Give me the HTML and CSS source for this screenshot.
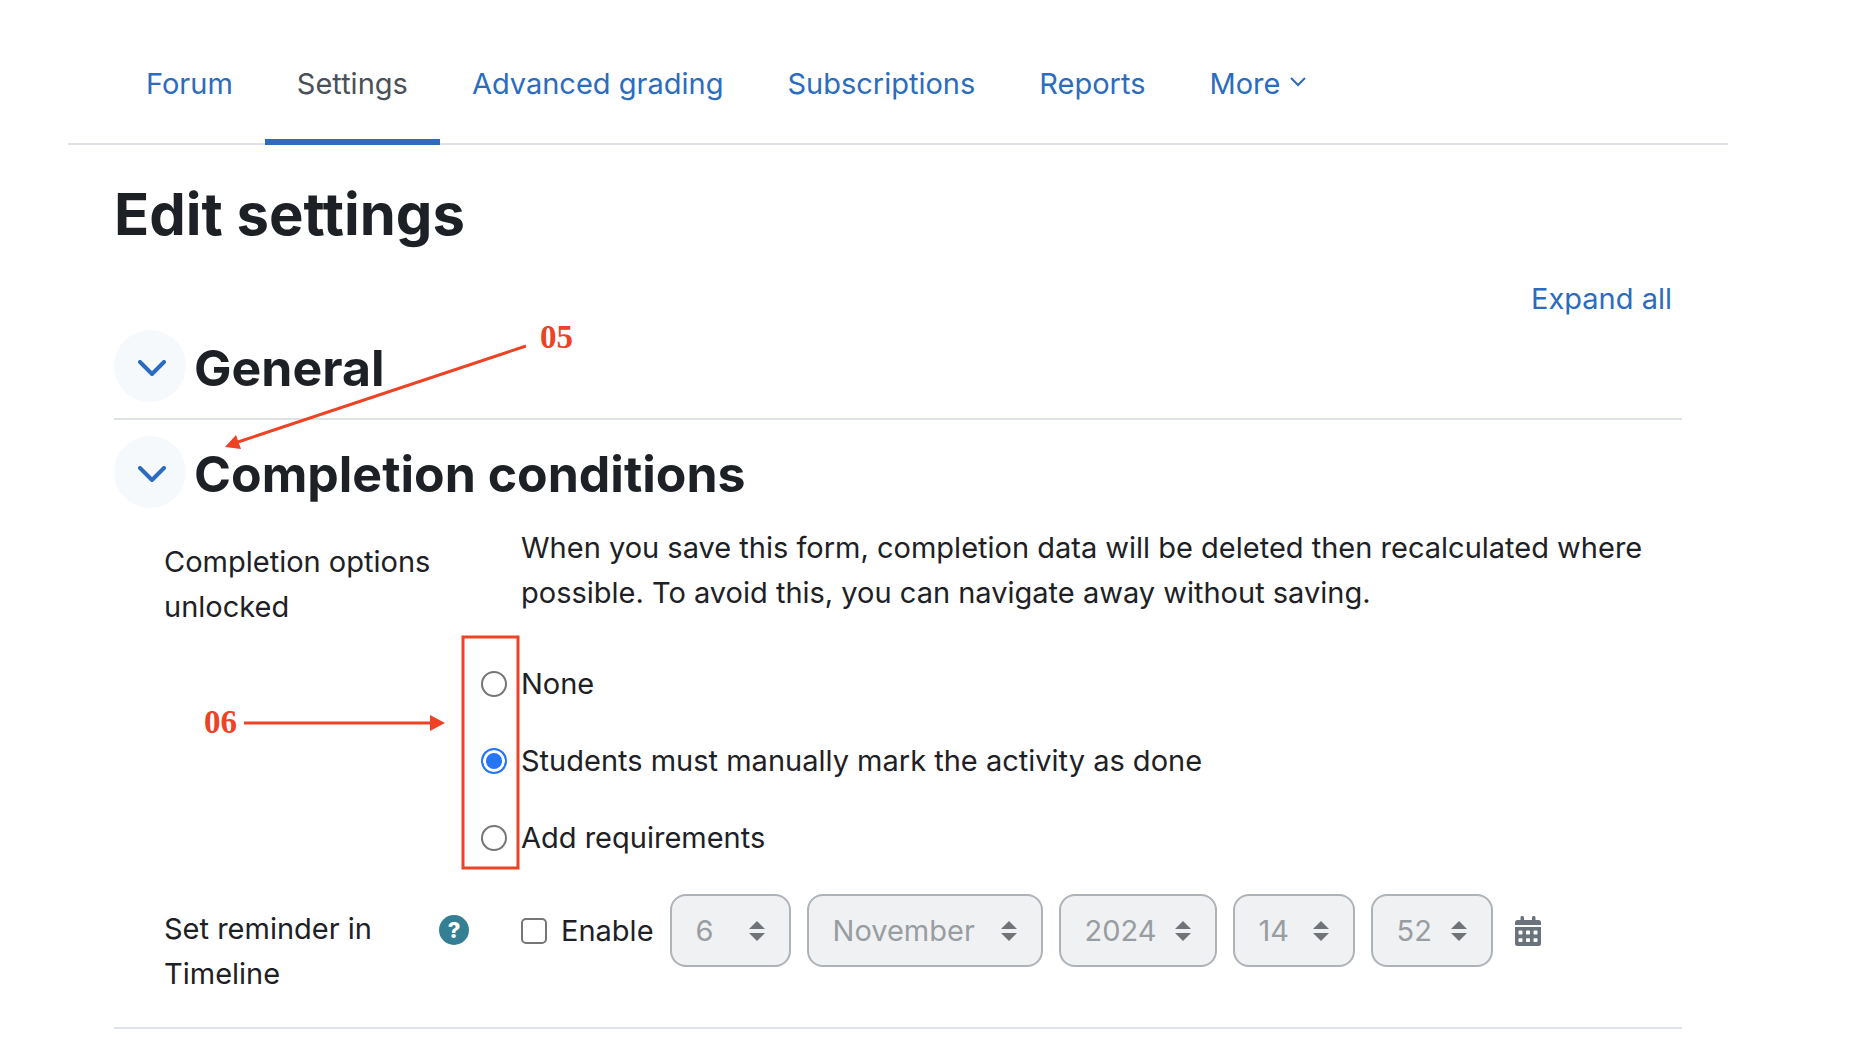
FILE: index.html
```html
<!DOCTYPE html>
<html lang="en">
<head>
<meta charset="utf-8">
<title>Edit settings</title>
<link rel="stylesheet" href="styles.css">
</head>
<body>
<div class="page">
  <nav class="tabs" aria-label="Activity">
    <a class="tab" href="#forum">Forum</a>
    <a class="tab tab-active" href="#settings" aria-current="page">Settings</a>
    <a class="tab" href="#grading">Advanced grading</a>
    <a class="tab" href="#subscriptions">Subscriptions</a>
    <a class="tab" href="#reports">Reports</a>
    <a class="tab" href="#more">More<svg class="more-icon" viewBox="0 0 16 16" aria-hidden="true"><path d="M1 4l7 7 7-7"/></svg></a>
  </nav>

  <main class="content">
    <h1 class="title">Edit settings</h1>
    <div class="expand"><a class="link" href="#expand">Expand all</a></div>

    <form>
      <section class="section">
        <div class="section-head">
          <button class="toggle" type="button" aria-label="General"><svg class="toggle-icon" viewBox="0 0 28 16" aria-hidden="true"><path d="M2 2l12 12L26 2"/></svg></button>
          <h2 class="section-title">General</h2>
        </div>
      </section>

      <section class="section section-open">
        <div class="section-head">
          <button class="toggle" type="button" aria-label="Completion conditions"><svg class="toggle-icon" viewBox="0 0 28 16" aria-hidden="true"><path d="M2 2l12 12L26 2"/></svg></button>
          <h2 class="section-title">Completion conditions</h2>
        </div>

        <div class="row row-notice">
          <div class="row-label">Completion options unlocked</div>
          <p class="notice">When you save this form, completion data will be deleted then recalculated where possible. To avoid this, you can navigate away without saving.</p>
        </div>

        <div class="radios">
          <label class="choice"><input class="radio" type="radio" name="completion">None</label>
          <label class="choice"><input class="radio" type="radio" name="completion" checked>Students must manually mark the activity as done</label>
          <label class="choice"><input class="radio" type="radio" name="completion">Add requirements</label>
        </div>

        <div class="row">
          <div class="row-label row-label-help">
            <span>Set reminder in Timeline</span>
            <button class="help" type="button" aria-label="Help">?</button>
          </div>
          <div class="dates">
            <label class="enable"><input class="check" type="checkbox">Enable</label>
            <select class="select day" aria-label="Day" disabled><option>6</option></select>
            <select class="select month" aria-label="Month" disabled><option>November</option></select>
            <select class="select year" aria-label="Year" disabled><option>2024</option></select>
            <select class="select time" aria-label="Hour" disabled><option>14</option></select>
            <select class="select time" aria-label="Minute" disabled><option>52</option></select>
            <button class="calendar" type="button" aria-label="Calendar">
              <svg class="calendar-icon" viewBox="0 0 26 30" aria-hidden="true"><path fill-rule="evenodd" d="M0 9V6.500Q0 4 2.500 4H5.500V1.300Q5.500 0 7.200 0T9 1.300V4H17V1.300Q17 0 18.700 0T20.500 1.300V4H23.500Q26 4 26 6.500V9ZM0 11H26V27.500Q26 30 23.500 30H2.500Q0 30 0 27.500ZM4.300 14.500Q3.500 14.500 3.500 15.300V17.700Q3.500 18.500 4.300 18.500H6.700Q7.500 18.500 7.500 17.700V15.300Q7.500 14.500 6.700 14.500ZM11.800 14.500Q11 14.500 11 15.300V17.700Q11 18.500 11.800 18.500H14.200Q15 18.500 15 17.700V15.300Q15 14.500 14.200 14.500ZM19.300 14.500Q18.500 14.500 18.500 15.300V17.700Q18.500 18.500 19.300 18.500H21.700Q22.500 18.500 22.500 17.700V15.300Q22.500 14.500 21.700 14.500ZM4.300 22.300Q3.500 22.300 3.500 23.100V25.200Q3.500 26 4.300 26H6.700Q7.500 26 7.500 25.200V23.100Q7.500 22.300 6.700 22.300ZM11.800 22.300Q11 22.300 11 23.100V25.200Q11 26 11.800 26H14.200Q15 26 15 25.200V23.100Q15 22.300 14.200 22.300ZM19.300 22.300Q18.500 22.300 18.500 23.100V25.200Q18.500 26 19.300 26H21.700Q22.500 26 22.500 25.200V23.100Q22.500 22.300 21.700 22.300Z"/></svg>
            </button>
          </div>
        </div>
      </section>
    </form>
  </main>

  <svg class="notes" width="600" height="900" viewBox="0 0 600 900">
    <path class="note-line" d="M526 346L238 442M244 723H432M463 637H518V868H463Z"/>
    <path class="note-head" d="M225 447L236 435L241 449ZM445 723L430 715V731Z"/>
    <text class="note-text" x="540" y="348">05</text>
    <text class="note-text" x="204" y="733">06</text>
  </svg>
</div>
</body>
</html>
```
FILE: styles.css
```css
* { box-sizing: border-box; }

body {
  margin: 0;
  background: #fff;
  color: #1d2125;
  font-family: Inter, "Liberation Sans", sans-serif;
  font-size: 29px;
  line-height: 45px;
}

h1, h2, p { margin: 0; }

button {
  border: 0;
  padding: 0;
  font: inherit;
}

.page {
  position: relative;
  padding: 24px 122px 12px 68px;
}

.tabs {
  display: flex;
  padding-left: 46px;
  border-bottom: 2px solid #dee2e6;
}

.tab {
  margin-bottom: -2px;
  padding: 37px 32px 33px;
  border-bottom: 6px solid transparent;
  color: #2b6cbf;
  text-decoration: none;
}

.tab-active {
  color: #495057;
  border-bottom-color: #2b6cbf;
}

.more-icon {
  width: 16px;
  height: 16px;
  margin-left: 10px;
  vertical-align: 4px;
  fill: none;
  stroke: currentColor;
  stroke-width: 2;
}

.content { padding: 33px 46px 0; }

.title {
  font-size: 58px;
  line-height: 72px;
}

.expand {
  padding: 26px 10px 0;
  text-align: right;
}

.link {
  color: #2b6cbf;
  text-decoration: none;
}

.section {
  padding-bottom: 16px;
  border-bottom: 2px solid #dee2e6;
}

.section-open {
  padding-top: 16px;
  padding-bottom: 31px;
}

.expand + form { margin-top: 9px; }

.section-head {
  display: flex;
  align-items: center;
  gap: 8px;
}

.toggle {
  display: flex;
  align-items: center;
  justify-content: center;
  width: 72px;
  height: 72px;
  padding: 4px 0 0 4px;
  border-radius: 50%;
  background: #f5f9fc;
}

.toggle-icon {
  width: 28px;
  height: 16px;
  fill: none;
  stroke: #2b6cbf;
  stroke-width: 4;
  stroke-linecap: round;
  stroke-linejoin: round;
}

.section-title {
  padding-top: 4px;
  font-size: 50px;
  line-height: 60px;
}

.row {
  display: grid;
  grid-template-columns: 305px 1fr;
  column-gap: 52px;
  margin-left: 50px;
}

.row-notice { padding-top: 17px; }

.row-label { padding-top: 12px; }

.row-notice .row-label { padding-top: 14px; }

.row-label-help {
  display: flex;
  justify-content: space-between;
}

.help {
  flex: none;
  width: 30px;
  height: 30px;
  margin-top: 9px;
  border-radius: 50%;
  background: #357f94;
  color: #fff;
  font-size: 22px;
  font-weight: 800;
  line-height: 30px;
}

.radios {
  display: grid;
  gap: 32px;
  padding: 32px 0 34px 367px;
}

.choice {
  display: flex;
  align-items: center;
  gap: 14px;
}

.radio, .check {
  flex: none;
  width: 26px;
  height: 26px;
  margin: 0;
  border: 2px solid #767676;
  background: #fff;
  appearance: none;
}

.radio { border-radius: 50%; }

.radio:checked {
  border-color: #2674f8;
  background: #2674f8;
  box-shadow: inset 0 0 0 3px #fff;
}

.check { border-radius: 5px; }

.dates {
  display: flex;
  align-items: center;
  align-self: start;
  gap: 16px;
}

.enable {
  display: flex;
  align-items: center;
  gap: 14px;
}

.select {
  height: 73px;
  padding: 0 24px;
  border: 2px solid #aeb3b9;
  border-radius: 16px;
  background: #f0f1f3 url("data:image/svg+xml,%3Csvg xmlns='http://www.w3.org/2000/svg' width='16' height='20'%3E%3Cpath d='M0 8L8 0L16 8ZM0 12H16L8 20Z' fill='%23707479'/%3E%3C/svg%3E") no-repeat right 24px center;
  color: #989da2;
  font: inherit;
  opacity: 1;
  appearance: none;
}

.day { width: 121px; }
.month { width: 236px; }
.year { width: 158px; }
.time { width: 122px; }

.calendar {
  margin-left: 6px;
  background: none;
}

.calendar-icon {
  display: block;
  width: 26px;
  height: 30px;
  fill: #6a737b;
}

.notes {
  position: absolute;
  top: 0;
  left: 0;
  pointer-events: none;
}

.note-line {
  fill: none;
  stroke: #ed4224;
  stroke-width: 3;
}

.note-head { fill: #ed4224; }

.note-text {
  fill: #ed4224;
  font: bold 33px "Liberation Serif", serif;
}
```
